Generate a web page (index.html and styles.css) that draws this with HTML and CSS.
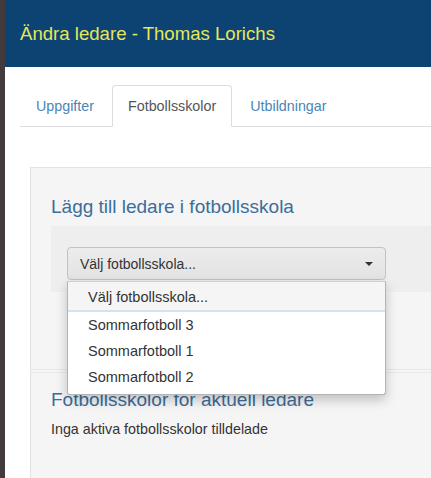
FILE: index.html
```html
<!DOCTYPE html>
<html lang="sv">
<head>
<meta charset="utf-8">
<title>Ändra ledare</title>
<link rel="stylesheet" href="styles.css">
</head>
<body>
<div class="page">
  <div class="strip"></div>
  <div class="main">
    <header class="header">
      <h1 class="title">Ändra ledare - Thomas Lorichs</h1>
    </header>
    <nav class="tabs">
      <a class="tab">Uppgifter</a>
      <a class="tab active">Fotbollsskolor</a>
      <a class="tab">Utbildningar</a>
    </nav>
    <div class="well">
      <h2 class="heading">Lägg till ledare i fotbollsskola</h2>
      <div class="inner">
        <div class="select-wrap">
          <div class="select">
            <span>Välj fotbollsskola...</span>
            <span class="caret"></span>
          </div>
          <ul class="options">
            <li class="option first">Välj fotbollsskola...</li>
            <li class="option">Sommarfotboll 3</li>
            <li class="option">Sommarfotboll 1</li>
            <li class="option">Sommarfotboll 2</li>
          </ul>
        </div>
      </div>
      <div class="spacer"></div>
      <div class="divider"></div>
      <h2 class="heading second">Fotbollsskolor för aktuell ledare</h2>
      <p class="empty">Inga aktiva fotbollsskolor tilldelade</p>
    </div>
  </div>
</div>
</body>
</html>
```
FILE: styles.css
```css
html, body {
  margin: 0;
  padding: 0;
  height: 100%;
  overflow: hidden;
  background: #ffffff;
  font-family: "Liberation Sans", Arial, sans-serif;
}

.page {
  display: flex;
  height: 478px;
}

.strip {
  width: 5px;
  flex: none;
  background: #433a3e;
}

.main {
  flex: 1;
  min-width: 0;
  background: #ffffff;
  overflow: hidden;
}

.header {
  height: 67px;
  background: #0d4373;
  display: flex;
  align-items: center;
  padding-left: 15px;
}

.title {
  margin: 0;
  font-size: 18.6px;
  font-weight: normal;
  line-height: 20px;
  color: #e6e65c;
  padding-top: 1px;
}

.tabs {
  display: flex;
  margin: 18px 0 0 15px;
  padding-left: 0;
  border-bottom: 1px solid #dddddd;
}

.tab {
  display: block;
  padding: 10px 15px;
  margin-right: 2px;
  margin-bottom: -1px;
  font-size: 14.3px;
  line-height: 20px;
  color: #4a85b6;
  border: 1px solid transparent;
  border-radius: 4px 4px 0 0;
}

.tab.active {
  color: #555555;
  background: #ffffff;
  border-color: #dddddd;
  border-bottom-color: #ffffff;
}

.well {
  margin: 40px -40px 0 25px;
  padding: 29px 0 40px 20px;
  background: #f5f5f5;
  border: 1px solid #e3e3e3;
}

.heading {
  margin: 0;
  font-size: 19px;
  font-weight: normal;
  line-height: 20px;
  color: #3b6e9a;
}

.inner {
  margin-top: 9px;
  padding: 21px 0 12px 16px;
  background: #eeeeee;
}

.select-wrap {
  position: relative;
  width: 319px;
}

.select {
  display: flex;
  align-items: center;
  justify-content: space-between;
  box-sizing: border-box;
  height: 33px;
  padding: 0 12px 0 12px;
  font-size: 14px;
  color: #333333;
  background: linear-gradient(#ececec, #e3e3e3);
  border: 1px solid #c2c2c2;
  border-radius: 4px;
}

.caret {
  width: 0;
  height: 0;
  border-left: 4px solid transparent;
  border-right: 4px solid transparent;
  border-top: 4px solid #333333;
}

.options {
  position: absolute;
  left: 0;
  top: 34px;
  width: 319px;
  box-sizing: border-box;
  margin: 0;
  padding: 0 0 4px 0;
  list-style: none;
  background: #ffffff;
  border: 1px solid #b4b4b4;
  border-top-color: #d0d0d0;
  border-radius: 0 0 3px 3px;
  box-shadow: 0 5px 12px rgba(0, 0, 0, 0.22);
  z-index: 2;
}

.option {
  height: 26px;
  line-height: 26px;
  padding-left: 20px;
  font-size: 14.5px;
  color: #333333;
}

.option.first {
  height: 28px;
  line-height: 30px;
  background: #f5f5f5;
  border-bottom: 2px solid #d3e3f3;
}

.spacer {
  height: 77px;
}

.divider {
  margin-left: -20px;
  height: 2px;
  border-top: 1px solid #e8e8e8;
  border-bottom: 1px solid #e8e8e8;
}

.heading.second {
  margin-top: 17px;
}

.empty {
  margin: 9px 0 0 0;
  font-size: 14.3px;
  line-height: 20px;
  color: #333333;
}
```
